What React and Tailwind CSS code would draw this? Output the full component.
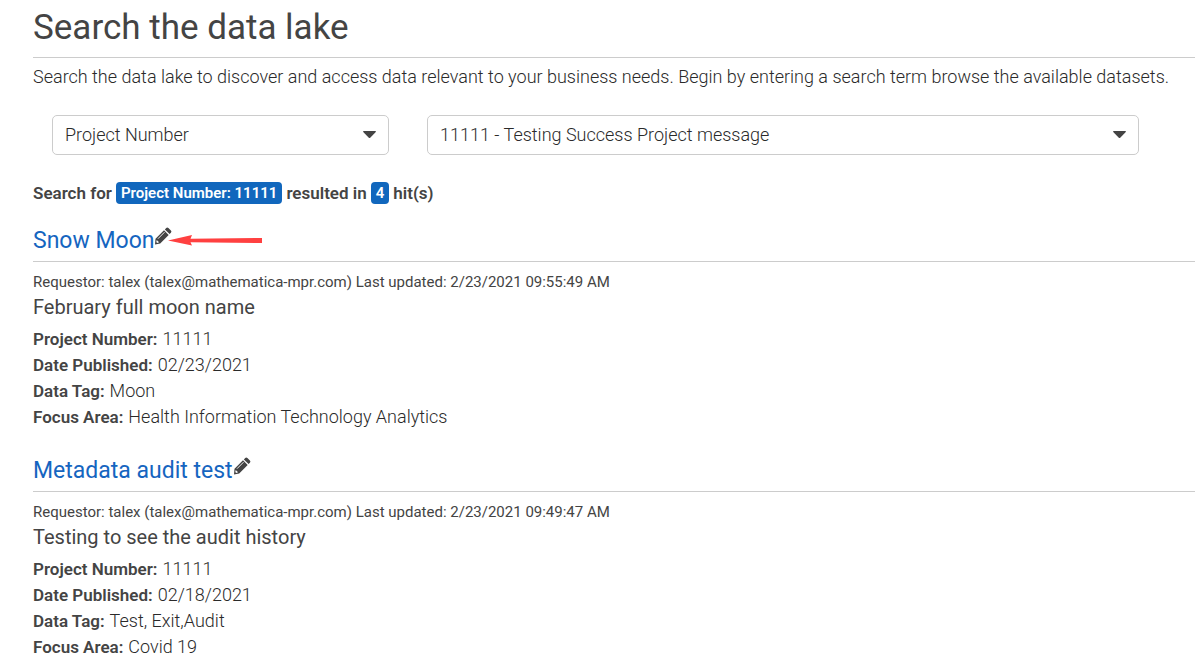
const results = [
  {
    title: "Snow Moon",
    updated: "2/23/2021 09:55:49 AM",
    description: "February full moon name",
    marked: true,
    fields: [
      ["Project Number", "11111"],
      ["Date Published", "02/23/2021"],
      ["Data Tag", "Moon"],
      ["Focus Area", "Health Information Technology Analytics"],
    ],
  },
  {
    title: "Metadata audit test",
    updated: "2/23/2021 09:49:47 AM",
    description: "Testing to see the audit history",
    fields: [
      ["Project Number", "11111"],
      ["Date Published", "02/18/2021"],
      ["Data Tag", "Test, Exit,Audit"],
      ["Focus Area", "Covid 19"],
    ],
  },
];

function PencilIcon() {
  return (
    <svg viewBox="0 0 18 18" className="h-[18px] w-[18px]" aria-hidden="true">
      <path
        fill="#444"
        d="M12.2 1.1 Q13.3 0 14.4 1.1 L16.9 3.6 Q18 4.7 16.9 5.8 L15.6 7.1 L10.9 2.4 Z M10 3.3 L14.7 8 L6.2 16.5 L1 17.6 L1.5 11.8 Z"
      />
      <path d="M10.5 5.2 L4 11.7" stroke="#fff" strokeWidth="0.9" fill="none" />
      <path d="M2.7 13 L5.1 15.3 L3.1 15.9 L2.3 15.1 Z" fill="#fff" />
    </svg>
  );
}

function Arrow() {
  return (
    <svg viewBox="0 0 94 12" className="mb-0.5 -ml-1 h-3 w-[94px]" aria-hidden="true">
      <path d="M0 6.5 L24 1 L22.5 4.7 L94 4 V9 L22.5 8.2 L24 11.5 Z" fill="#ff4040" />
    </svg>
  );
}

function Dropdown({ label, value }) {
  return (
    <div className="relative">
      <select
        aria-label={label}
        className="h-10 w-full appearance-none rounded-[5px] border border-[#ccc] bg-white pr-9 pl-3 text-lg font-light text-[#2a2a2a]"
      >
        <option>{value}</option>
      </select>
      <svg
        viewBox="0 0 13 7"
        className="pointer-events-none absolute top-4 right-[13px] h-[7px] w-[13px]"
        aria-hidden="true"
      >
        <path d="M0.5 0 H12.5 L13 0.8 L7.2 6.7 Q6.5 7.2 5.8 6.7 L0 0.8 Z" fill="#444" />
      </svg>
    </div>
  );
}

function Badge({ children }) {
  return (
    <span className="rounded bg-[#1167bd] px-[5px] text-[15px] leading-[22px] font-semibold text-white">
      {children}
    </span>
  );
}

function Result({ title, updated, description, fields, marked }) {
  return (
    <article className="mb-5">
      <div className="flex h-[42px] items-center border-b border-[#ccc]">
        <h2 className="text-[23px]">
          <a href="#" className="text-[#1565c0]">
            {title}
          </a>
        </h2>
        <button type="button" aria-label={"Edit " + title} className="mb-2.5">
          <PencilIcon />
        </button>
        {marked && <Arrow />}
      </div>
      <p className="mt-2 text-[15px] leading-6">
        Requestor: talex (talex@mathematica-mpr.com) Last updated: {updated}
      </p>
      <p className="text-xl leading-[26px]">{description}</p>
      <dl className="pt-1.5 text-lg leading-[26px]">
        {fields.map(([name, value]) => (
          <div key={name} className="flex gap-[5px]">
            <dt className="text-[17px] font-semibold">{name}:</dt>
            <dd className="font-light text-[#2a2a2a]">{value}</dd>
          </div>
        ))}
      </dl>
    </article>
  );
}

export default function App() {
  return (
    <main className="bg-white pl-[33px] font-[Roboto,sans-serif] text-lg text-[#444]">
      <h1 className="border-b border-[#ccc] pt-[5px] pb-[7px] text-[35px] leading-[45px]">
        Search the data lake
      </h1>
      <p className="mt-1.5 leading-[26px] font-light text-[#2a2a2a]">
        Search the data lake to discover and access data relevant to your business needs. Begin by
        entering a search term browse the available datasets.
      </p>
      <form className="mt-[25px] mr-[37px] grid grid-cols-3">
        <div className="px-[19px]">
          <Dropdown label="Search by" value="Project Number" />
        </div>
        <div className="col-span-2 px-[19px]">
          <Dropdown label="Project" value="11111 - Testing Success Project message" />
        </div>
      </form>
      <p className="mt-[25px] mb-3.5 flex items-center gap-1 text-[17px] leading-[26px] font-semibold">
        Search for <Badge>Project Number: 11111</Badge> resulted in <Badge>4</Badge> hit(s)
      </p>
      {results.map((result) => (
        <Result key={result.title} {...result} />
      ))}
    </main>
  );
}
